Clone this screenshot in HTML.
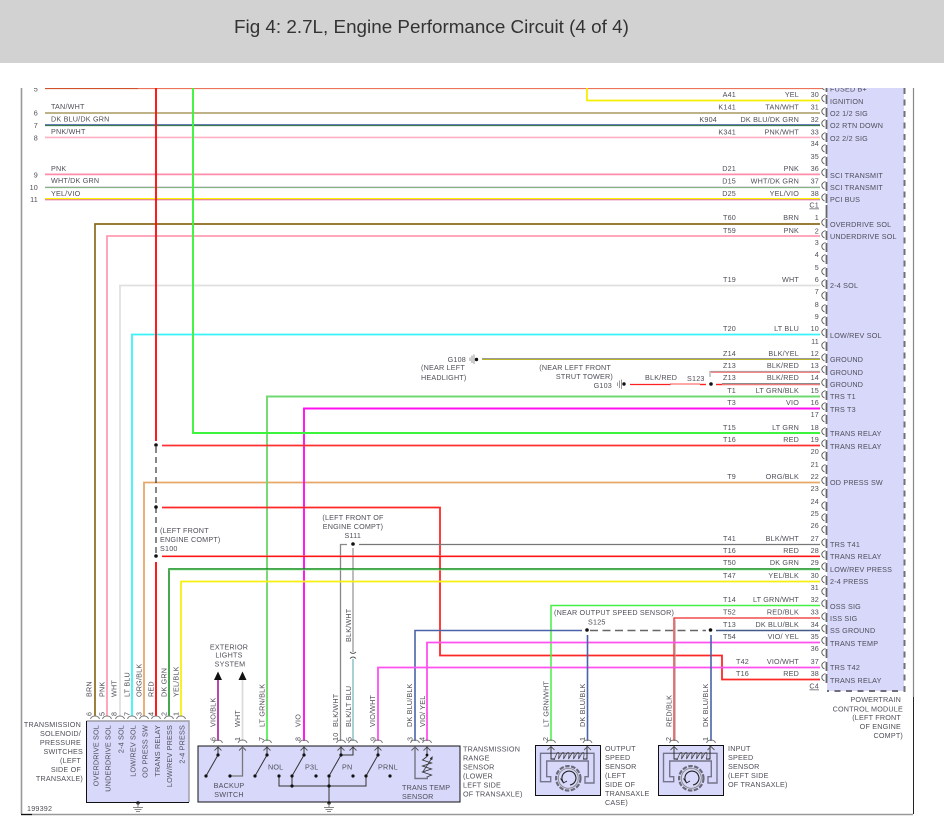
<!DOCTYPE html>
<html><head><meta charset="utf-8"><style>
html,body{margin:0;padding:0;background:#fff;width:944px;height:829px;overflow:hidden}
#h{position:absolute;left:0;top:0;width:944px;height:63px;background:#d2d2d2}
#h div{position:absolute;left:234px;top:16px;font:18.85px/22px "Liberation Sans",sans-serif;color:#333;white-space:nowrap}
svg{position:absolute;left:0;top:0;filter:blur(.3px)}
text{font-family:"Liberation Sans",sans-serif;font-size:7.2px;letter-spacing:.2px;fill:#4e4e58}
.e{text-anchor:end}.m{text-anchor:middle}
path,line{fill:none}
</style></head><body>
<div id="h"><div>Fig 4: 2.7L, Engine Performance Circuit (4 of 4)</div></div>
<svg width="944" height="829" viewBox="0 0 944 829">
<defs>
<clipPath id="cp"><rect x="0" y="88" width="944" height="741"/></clipPath>
<g id="c"><path d="M825.5 -5.5Q821 -4 822 -0.5Q822.5 1 824.5 2" stroke="#555" stroke-width=".9"/><path d="M826.5 -5V4" stroke="#666" stroke-width="1.8"/></g>
<g id="u"><path d="M-4.5 1.5Q-3.5 -1.5 0 -1.5Q3.5 -1.5 4.5 1.5" stroke="#777" stroke-width=".9"/></g>
<g id="a"><path d="M-3.5 2.5L0 -1L3.5 2.5" stroke="#555" stroke-width=".9"/></g>
<g id="gnd"><circle cx="0" cy="0" r="1.7" fill="#111"/><path d="M0 0V4" stroke="#777"/><path d="M-5 4.5H5M-3.5 6.5H3.5M-2 8.5H2" stroke="#888" stroke-width="1"/></g>
<g id="sen"><path d="M5.5 36.7V8.3H59V38H50V31.7H53.3V16H11.7V31.7H15.7V36.7Z" stroke="#74748a" stroke-width="1.4"/>
<path d="M16 1V14H20M52 1V14H48" stroke="#222" stroke-width=".9"/>
<path d="M19 15L22 8Q24.5 6.5 24 10L23.5 14L27 8Q29.5 6.5 29 10L28.5 14L32 8Q34.5 6.5 34 10L33.5 14L37 8Q39.5 6.5 39 10L38.5 14L42 8Q44.5 6.5 44 10L43.5 14L47 8Q49.5 6.5 49 10L48.5 14" stroke="#444" stroke-width=".8"/>
<circle cx="33.3" cy="33.3" r="12.2" fill="none" stroke="#6a6a78" stroke-width="2.2" stroke-dasharray="4.5 1.5"/><circle cx="33.3" cy="33.3" r="10" fill="none" stroke="#888" stroke-width=".9"/>
<path d="M28.5 37.5A7 7 0 1 1 35 40" stroke="#222" stroke-width="1.1"/><path d="M25.5 33.5L28.5 38L32 36" stroke="#222" stroke-width=".8"/></g>
</defs>

<path d="M21.5 88V814" stroke="#999" stroke-width="1.6"/>
<path d="M913.5 88V697" stroke="#888" stroke-width="1.2"/><path d="M913.5 697V814" stroke="#222" stroke-width="1"/>
<path d="M21 814.5H913" stroke="#999" stroke-width="1.4"/><path d="M21 814.5H32" stroke="#111" stroke-width="1.2"/>

<g clip-path="url(#cp)">
<!-- PCM body -->
<rect x="827" y="80" width="77" height="611" fill="#d8d8fb"/>
<path d="M904.5 88V691H827" stroke="#70707a" stroke-width="2" stroke-dasharray="6 5.5"/>

<!-- horizontal wires -->
<path d="M45 88.5H138" stroke="#d0532e" stroke-width="1.3"/><path d="M138 88.5H822" stroke="#ec7458" stroke-width="1.3"/>
<path d="M587 88V100.5H820" stroke="#f5f000" stroke-width="1.8"/>
<path d="M45 113H820" stroke="#a89860" stroke-width="1.5"/>
<path d="M45 124.6H820" stroke="#4f6cae" stroke-width="1"/><path d="M45 125.6H820" stroke="#246c34" stroke-width="1"/>
<path d="M45 137.4H820" stroke="#ffb0c2" stroke-width="1.6"/>
<path d="M45 174.4H820" stroke="#ff8ca8" stroke-width="1.8"/>
<path d="M45 186.7H820" stroke="#d4d4dc" stroke-width="1"/><path d="M45 187.6H820" stroke="#76ae76" stroke-width="1"/>
<path d="M45 198.6H820" stroke="#fbf600" stroke-width="1.3"/><path d="M45 199.8H820" stroke="#d84c90" stroke-width=".9"/>
<path d="M95 716V224H820" stroke="#8a6a1c" stroke-width="1.7"/>
<path d="M107 716V236H820" stroke="#ff9cb2" stroke-width="1.8"/>
<path d="M120 716V285.5H820" stroke="#e0e0e0" stroke-width="1.8"/>
<path d="M132 716V334.5H820" stroke="#38f4fa" stroke-width="1.8"/>
<path d="M144 716V482.5H820" stroke="#e8a868" stroke-width="1.8"/>
<path d="M482 358.6H820" stroke="#8c8c8c" stroke-width="1"/><path d="M482 359.5H820" stroke="#b8b428" stroke-width="1"/>
<path d="M820 371.5H710V377" stroke="#aaa" stroke-width="1.2"/><path d="M820 372.3H711" stroke="#f06060" stroke-width="1"/>
<path d="M630 384.5H671" stroke="#f22" stroke-width="1.2"/>
<path d="M670 384H700" stroke="#f88" stroke-width="1.4"/><path d="M700 384.5H706" stroke="#f22" stroke-width="1.4"/>
<path d="M716 384.5H722" stroke="#f22" stroke-width="1.4"/><path d="M722 383.8H820" stroke="#666" stroke-width="1"/><path d="M722 384.8H820" stroke="#f66" stroke-width="1"/>
<path d="M267 716V396.5H820" stroke="#70d870" stroke-width="1.9"/>
<path d="M304 716V408.5H820" stroke="#ff10f0" stroke-width="1.9"/>
<path d="M193 88V433H820" stroke="#3cf43c" stroke-width="1.9"/>
<path d="M162 445.5H820" stroke="#ff3030" stroke-width="1.8"/>
<path d="M162 507.5H440V655.5H722V679.5H820" stroke="#ff2828" stroke-width="1.8"/>
<path d="M359 544.5H820" stroke="#777" stroke-width="1.3"/>
<path d="M347 544.5H340.5V741" stroke="#888" stroke-width="1.3"/>
<path d="M353 548V652" stroke="#999" stroke-width="1.3"/><path d="M353 659V741" stroke="#7ab8b8" stroke-width="1.3"/>
<path d="M162 556.5H820" stroke="#f00" stroke-width="1.2"/><path d="M162 555.8H820" stroke="#ff5050" stroke-width=".9"/>
<path d="M169 716V569H820" stroke="#0a8a14" stroke-width="1.5"/><path d="M169 570H820" stroke="#9ee09e" stroke-width=".7"/>
<path d="M181 716V581.5H820" stroke="#f6f010" stroke-width="1.8"/>
<path d="M551 741V605.5H820" stroke="#44f044" stroke-width="1.5"/>
<path d="M674 741V618H820" stroke="#ee2a2a" stroke-width="1.3"/><path d="M675.2 741V619.5" stroke="#aaa" stroke-width=".9"/>
<path d="M415 741V630.5H582" stroke="#4a62a8" stroke-width="1.6"/>
<path d="M590 630.5H706" stroke="#666" stroke-width="1.5" stroke-dasharray="8 4.5"/>
<path d="M716 630.5H820" stroke="#44588c" stroke-width="1.6"/>
<path d="M427 741V642.5H820" stroke="#ff50f0" stroke-width="1.8"/>
<path d="M378 741V667.5H820" stroke="#ff50f0" stroke-width="1.8"/>
<path d="M156 88V441M156 562V716" stroke="#ff1010" stroke-width="1.9"/>
<path d="M156 447V555" stroke="#222" stroke-width="1.1" stroke-dasharray="6 4"/>
<path d="M587.5 635V741" stroke="#4a62a8" stroke-width="1.6"/>
<path d="M711 635V741" stroke="#4a62a8" stroke-width="1.6"/>

<!-- arrows wires -->
<path d="M218 680V741" stroke="#b034a8" stroke-width="1.8"/>
<path d="M242.5 680V741" stroke="#dcdcdc" stroke-width="1.8"/>
<path d="M218 671.5L214 680H222Z" style="fill:#111"/><path d="M242.5 671.5L238.5 680H246.5Z" style="fill:#111"/>
<path d="M267 716V741" stroke="#60f060" stroke-width="1.9"/><path d="M304 716V741" stroke="#ff10f0" stroke-width="1.9"/>
<path d="M350 652Q353 655 356 652M350 658.5Q353 655.5 356 658.5" stroke="#555" stroke-width=".9"/>
<!-- dots -->
<g fill="#111"><circle cx="156" cy="445" r="1.8"/><circle cx="156" cy="507" r="1.8"/><circle cx="156" cy="556" r="1.8"/><circle cx="353" cy="544" r="1.8"/><circle cx="711" cy="384" r="1.8"/><circle cx="587" cy="630" r="1.8"/><circle cx="710.5" cy="630" r="1.8"/></g>

<!-- ground G108/G103 -->
<g stroke="#999" stroke-width="1"><path d="M470 357.5V361M472 355.5V363M474 354.5V364"/><path d="M617.5 382.5V386M619.5 380.5V388M621.5 379.5V389"/></g>
<circle cx="476.5" cy="359.5" r="1.7" fill="#111"/><circle cx="624" cy="384" r="1.7" fill="#111"/>

<!-- PCM chevrons -->
<g>
<use href="#c" y="88"/><use href="#c" y="100"/><use href="#c" y="113"/><use href="#c" y="125"/><use href="#c" y="138"/><use href="#c" y="150"/><use href="#c" y="162"/><use href="#c" y="174"/><use href="#c" y="187"/><use href="#c" y="199"/>
<use href="#c" y="224"/><use href="#c" y="236"/><use href="#c" y="248"/><use href="#c" y="260"/><use href="#c" y="273"/><use href="#c" y="285"/><use href="#c" y="297"/><use href="#c" y="310"/><use href="#c" y="322"/><use href="#c" y="334"/><use href="#c" y="347"/><use href="#c" y="359"/><use href="#c" y="371"/><use href="#c" y="384"/><use href="#c" y="396"/><use href="#c" y="408"/><use href="#c" y="420"/><use href="#c" y="433"/><use href="#c" y="445"/><use href="#c" y="457"/><use href="#c" y="470"/><use href="#c" y="482"/><use href="#c" y="494"/><use href="#c" y="507"/><use href="#c" y="519"/><use href="#c" y="531"/><use href="#c" y="544"/><use href="#c" y="556"/><use href="#c" y="568"/><use href="#c" y="581"/><use href="#c" y="593"/><use href="#c" y="605"/><use href="#c" y="618"/><use href="#c" y="630"/><use href="#c" y="642"/><use href="#c" y="654"/><use href="#c" y="667"/><use href="#c" y="679"/>
<path d="M826.5 205V218" stroke="#666" stroke-width="1.8"/>
</g>

<!-- left block -->
<rect x="86" y="721" width="103" height="81" fill="#d8d8fb"/>
<path d="M86.5 721H189V802" stroke="#9a9aa2" stroke-width="1.4"/><path d="M86.5 721V802.5H189" stroke="#111" stroke-width="1"/>
<g><use href="#u" x="95" y="717.5"/><use href="#u" x="107" y="717.5"/><use href="#u" x="120" y="717.5"/><use href="#u" x="132" y="717.5"/><use href="#u" x="144" y="717.5"/><use href="#u" x="156" y="717.5"/><use href="#u" x="169" y="717.5"/><use href="#u" x="181" y="717.5"/></g>
<use href="#gnd" x="138" y="803"/>

<!-- mid block -->
<rect x="198" y="746" width="262" height="56" fill="#d8d8fb" stroke="#111" stroke-width="1"/>
<g><use href="#u" x="218" y="741.5"/><use href="#u" x="242.5" y="741.5"/><use href="#u" x="267" y="741.5"/><use href="#u" x="304" y="741.5"/><use href="#u" x="341" y="741.5"/><use href="#u" x="353" y="741.5"/><use href="#u" x="378" y="741.5"/><use href="#u" x="415" y="741.5"/><use href="#u" x="427" y="741.5"/>
<use href="#a" x="218" y="748"/><use href="#a" x="242.5" y="748"/><use href="#a" x="267" y="748"/><use href="#a" x="304" y="748"/><use href="#a" x="341" y="748"/><use href="#a" x="353" y="748"/><use href="#a" x="378" y="748"/><use href="#a" x="415" y="748"/><use href="#a" x="427" y="748"/></g>
<g stroke="#333" stroke-width="1">
<path d="M218 747V755L206 776"/><path d="M267 747V755L255 776"/><path d="M304 747V755L292 776"/><path d="M341 747V755L329 776"/><path d="M378 747V755L366 776"/>
<path d="M353 747V755H341"/>
<path d="M279 776V786H366V776M292 776V786M329 776V802"/>
<path d="M427 747V756.5L422.5 760L431.5 763L422.5 766L431.5 769L422.5 772L431.5 775L427 777" stroke-width=".9"/>
</g>
<path d="M415 747V778.5H427.3V776" stroke="#747484" stroke-width="1.4"/>
<path d="M242.5 747V776H230" stroke="#777" stroke-width="1.3"/>
<path d="M423 771.7L432 757.7" stroke="#444" stroke-width=".9"/><path d="M432.5 756.5L430 758.5L432 760Z" style="fill:#333" stroke="#333" stroke-width=".5"/>
<g fill="#111"><circle cx="218" cy="755" r="1.6"/><circle cx="206" cy="776" r="1.6"/><circle cx="230" cy="776" r="1.6"/><circle cx="267" cy="755" r="1.6"/><circle cx="255" cy="776" r="1.6"/><circle cx="279" cy="776" r="1.6"/><circle cx="304" cy="755" r="1.6"/><circle cx="292" cy="776" r="1.6"/><circle cx="316" cy="776" r="1.6"/><circle cx="341" cy="755" r="1.6"/><circle cx="329" cy="776" r="1.6"/><circle cx="353" cy="776" r="1.6"/><circle cx="378" cy="755" r="1.6"/><circle cx="366" cy="776" r="1.6"/><circle cx="390" cy="776" r="1.6"/><circle cx="292" cy="786" r="1.6"/><circle cx="329" cy="786" r="1.6"/><circle cx="427" cy="755" r="1.4"/></g>
<use href="#gnd" x="329" y="803"/>

<!-- sensors -->
<rect x="535.5" y="745.5" width="65" height="50" fill="#d8d8fb" stroke="#111" stroke-width="1"/>
<rect x="658.5" y="745.5" width="65" height="50" fill="#d8d8fb" stroke="#111" stroke-width="1"/>
<use href="#sen" x="535" y="745"/><use href="#sen" x="658" y="745"/>
<use href="#u" x="551" y="741.5"/><use href="#u" x="587.5" y="741.5"/><use href="#u" x="674" y="741.5"/><use href="#u" x="711" y="741.5"/>
<use href="#a" x="551" y="747.5"/><use href="#a" x="587.5" y="747.5"/><use href="#a" x="674" y="747.5"/><use href="#a" x="711" y="747.5"/>

<!-- left labels -->
<text class="e" x="38" y="91.5">5</text><text class="e" x="38" y="115.5">6</text><text class="e" x="38" y="128">7</text><text class="e" x="38" y="140.5">8</text><text class="e" x="38" y="177.5">9</text><text class="e" x="38" y="190">10</text><text class="e" x="38" y="202">11</text>
<text x="51" y="109">TAN/WHT</text><text x="51" y="121.5">DK BLU/DK GRN</text><text x="51" y="134">PNK/WHT</text><text x="51" y="171">PNK</text><text x="51" y="183">WHT/DK GRN</text><text x="51" y="196">YEL/VIO</text>

<!-- codes -->
<g class="e">
<text class="e" x="736" y="97">A41</text><text class="e" x="736" y="109.5">K141</text><text class="e" x="717" y="122">K904</text><text class="e" x="736" y="134.5">K341</text><text class="e" x="736" y="171">D21</text><text class="e" x="736" y="183.5">D15</text><text class="e" x="736" y="196">D25</text>
<text class="e" x="736" y="220">T60</text><text class="e" x="736" y="233">T59</text><text class="e" x="736" y="282">T19</text><text class="e" x="736" y="331">T20</text><text class="e" x="736" y="356">Z14</text><text class="e" x="736" y="368">Z13</text><text class="e" x="736" y="380">Z13</text><text class="e" x="736" y="393">T1</text><text class="e" x="736" y="405">T3</text><text class="e" x="736" y="430">T15</text><text class="e" x="736" y="442">T16</text><text class="e" x="736" y="479">T9</text><text class="e" x="736" y="541">T41</text><text class="e" x="736" y="553">T16</text><text class="e" x="736" y="565">T50</text><text class="e" x="736" y="578">T47</text><text class="e" x="736" y="602">T14</text><text class="e" x="736" y="614.5">T52</text><text class="e" x="736" y="627">T13</text><text class="e" x="736" y="639">T54</text><text class="e" x="749" y="664">T42</text><text class="e" x="749" y="676">T16</text>
</g>
<!-- colours -->
<text class="e" x="799" y="97">YEL</text><text class="e" x="799" y="109.5">TAN/WHT</text><text class="e" x="799" y="122">DK BLU/DK GRN</text><text class="e" x="799" y="134.5">PNK/WHT</text><text class="e" x="799" y="171">PNK</text><text class="e" x="799" y="183.5">WHT/DK GRN</text><text class="e" x="799" y="196">YEL/VIO</text>
<text class="e" x="799" y="220">BRN</text><text class="e" x="799" y="233">PNK</text><text class="e" x="799" y="282">WHT</text><text class="e" x="799" y="331">LT BLU</text><text class="e" x="799" y="356">BLK/YEL</text><text class="e" x="799" y="368">BLK/RED</text><text class="e" x="799" y="380">BLK/RED</text><text class="e" x="799" y="393">LT GRN/BLK</text><text class="e" x="799" y="405">VIO</text><text class="e" x="799" y="430">LT GRN</text><text class="e" x="799" y="442">RED</text><text class="e" x="799" y="479">ORG/BLK</text><text class="e" x="799" y="541">BLK/WHT</text><text class="e" x="799" y="553">RED</text><text class="e" x="799" y="565">DK GRN</text><text class="e" x="799" y="578">YEL/BLK</text><text class="e" x="799" y="602">LT GRN/WHT</text><text class="e" x="799" y="614.5">RED/BLK</text><text class="e" x="799" y="627">DK BLU/BLK</text><text class="e" x="799" y="639">VIO/ YEL</text><text class="e" x="799" y="664">VIO/WHT</text><text class="e" x="799" y="676">RED</text>
<!-- pin numbers -->
<text class="e" x="819" y="97">30</text><text class="e" x="819" y="109.5">31</text><text class="e" x="819" y="122">32</text><text class="e" x="819" y="134.5">33</text><text class="e" x="819" y="146">34</text><text class="e" x="819" y="159">35</text><text class="e" x="819" y="171">36</text><text class="e" x="819" y="183.5">37</text><text class="e" x="819" y="196">38</text>
<text class="e" x="819" y="207.5" text-decoration="underline">C1</text>
<text class="e" x="819" y="220">1</text><text class="e" x="819" y="233.5">2</text><text class="e" x="819" y="245">3</text><text class="e" x="819" y="257">4</text><text class="e" x="819" y="270">5</text><text class="e" x="819" y="282">6</text><text class="e" x="819" y="294">7</text><text class="e" x="819" y="307">8</text><text class="e" x="819" y="319">9</text><text class="e" x="819" y="331">10</text><text class="e" x="819" y="344">11</text><text class="e" x="819" y="356">12</text><text class="e" x="819" y="368">13</text><text class="e" x="819" y="380">14</text><text class="e" x="819" y="393">15</text><text class="e" x="819" y="405">16</text><text class="e" x="819" y="417">17</text><text class="e" x="819" y="430">18</text><text class="e" x="819" y="442">19</text><text class="e" x="819" y="454">20</text><text class="e" x="819" y="467">21</text><text class="e" x="819" y="479">22</text><text class="e" x="819" y="491">23</text><text class="e" x="819" y="504">24</text><text class="e" x="819" y="516">25</text><text class="e" x="819" y="528">26</text><text class="e" x="819" y="541">27</text><text class="e" x="819" y="553">28</text><text class="e" x="819" y="565">29</text><text class="e" x="819" y="578">30</text><text class="e" x="819" y="590">31</text><text class="e" x="819" y="602">32</text><text class="e" x="819" y="614.5">33</text><text class="e" x="819" y="627">34</text><text class="e" x="819" y="639">35</text><text class="e" x="819" y="651">36</text><text class="e" x="819" y="664">37</text><text class="e" x="819" y="676">38</text>
<text class="e" x="819" y="688.5" text-decoration="underline">C4</text>
<!-- PCM labels -->
<text x="830" y="91.5">FUSED B+</text><text x="830" y="104">IGNITION</text><text x="830" y="116">O2 1/2 SIG</text><text x="830" y="128">O2 RTN DOWN</text><text x="830" y="141">O2 2/2 SIG</text><text x="830" y="178">SCI TRANSMIT</text><text x="830" y="190">SCI TRANSMIT</text><text x="830" y="202">PCI BUS</text><text x="830" y="227">OVERDRIVE SOL</text><text x="830" y="239">UNDERDRIVE SOL</text><text x="830" y="288">2-4 SOL</text><text x="830" y="338">LOW/REV SOL</text><text x="830" y="362">GROUND</text><text x="830" y="375">GROUND</text><text x="830" y="387">GROUND</text><text x="830" y="399">TRS T1</text><text x="830" y="412">TRS T3</text><text x="830" y="436">TRANS RELAY</text><text x="830" y="449">TRANS RELAY</text><text x="830" y="485">OD PRESS SW</text><text x="830" y="547">TRS T41</text><text x="830" y="559">TRANS RELAY</text><text x="830" y="572">LOW/REV PRESS</text><text x="830" y="584">2-4 PRESS</text><text x="830" y="609">OSS SIG</text><text x="830" y="621">ISS SIG</text><text x="830" y="633">SS GROUND</text><text x="830" y="646">TRANS TEMP</text><text x="830" y="670">TRS T42</text><text x="830" y="683">TRANS RELAY</text>
<text class="e" x="901" y="702">POWERTRAIN</text><text class="e" x="903" y="711.3">CONTROL MODULE</text><text class="e" x="901" y="720">(LEFT FRONT</text><text class="e" x="901" y="729">OF ENGINE</text><text class="e" x="903" y="738">COMPT)</text>

<!-- mid labels -->
<text class="e" x="466" y="362">G108</text><text x="421" y="370">(NEAR LEFT</text><text x="421" y="380">HEADLIGHT)</text>
<text class="e" x="611" y="370">(NEAR LEFT FRONT</text><text class="e" x="613" y="379">STRUT TOWER)</text><text class="e" x="612" y="388">G103</text>
<text x="645" y="380">BLK/RED</text><text x="687" y="381">S123</text>
<text x="160" y="533">(LEFT FRONT</text><text x="160" y="542">ENGINE COMPT)</text><text x="160" y="551">S100</text>
<text class="m" x="353" y="520">(LEFT FRONT OF</text><text class="m" x="353" y="529">ENGINE COMPT)</text><text x="344.5" y="538">S111</text>
<text x="554" y="615">(NEAR OUTPUT SPEED SENSOR)</text><text x="588" y="624.5">S125</text>

<!-- left block labels -->
<text class="e" x="81" y="727">TRANSMISSION</text><text class="e" x="81" y="736">SOLENOID/</text><text class="e" x="81" y="745">PRESSURE</text><text class="e" x="83" y="754">SWITCHES</text><text class="e" x="81" y="763">(LEFT</text><text class="e" x="81" y="772">SIDE OF</text><text class="e" x="83" y="781">TRANSAXLE)</text>
<text x="27" y="811">199392</text>
<g>
<text class="e" transform="rotate(-90 98.5 725)" x="98.5" y="725">OVERDRIVE SOL</text>
<text class="e" transform="rotate(-90 110.5 725)" x="110.5" y="725">UNDERDRIVE SOL</text>
<text class="e" transform="rotate(-90 123.5 725)" x="123.5" y="725">2-4 SOL</text>
<text class="e" transform="rotate(-90 135.5 725)" x="135.5" y="725">LOW/REV SOL</text>
<text class="e" transform="rotate(-90 147.5 725)" x="147.5" y="725">OD PRESS SW</text>
<text class="e" transform="rotate(-90 160 725)" x="160" y="725">TRANS RELAY</text>
<text class="e" transform="rotate(-90 172 725)" x="172" y="725">LOW/REV PRESS</text>
<text class="e" transform="rotate(-90 184.5 725)" x="184.5" y="725">2-4 PRESS</text>
<text transform="rotate(-90 91.5 697)" x="91.5" y="697">BRN</text>
<text transform="rotate(-90 104.5 697)" x="104.5" y="697">PNK</text>
<text transform="rotate(-90 116.5 697)" x="116.5" y="697">WHT</text>
<text transform="rotate(-90 129.5 697)" x="129.5" y="697">LT BLU</text>
<text transform="rotate(-90 141.5 697)" x="141.5" y="697">ORG/BLK</text>
<text transform="rotate(-90 153.5 697)" x="153.5" y="697">RED</text>
<text transform="rotate(-90 166.5 697)" x="166.5" y="697">DK GRN</text>
<text transform="rotate(-90 178.5 697)" x="178.5" y="697">YEL/BLK</text>
<text transform="rotate(-90 91.5 716)" x="91.5" y="716">6</text>
<text transform="rotate(-90 104.5 716)" x="104.5" y="716">5</text>
<text transform="rotate(-90 116.5 716)" x="116.5" y="716">8</text>
<text transform="rotate(-90 129.5 716)" x="129.5" y="716">7</text>
<text transform="rotate(-90 141.5 716)" x="141.5" y="716">3</text>
<text transform="rotate(-90 153.5 716)" x="153.5" y="716">4</text>
<text transform="rotate(-90 166.5 716)" x="166.5" y="716">2</text>
<text transform="rotate(-90 178.5 716)" x="178.5" y="716">1</text>

<text transform="rotate(-90 215.5 727)" x="215.5" y="727">VIO/BLK</text>
<text transform="rotate(-90 240 727)" x="240" y="727">WHT</text>
<text transform="rotate(-90 264.5 727)" x="264.5" y="727">LT GRN/BLK</text>
<text transform="rotate(-90 300.5 727)" x="300.5" y="727">VIO</text>
<text transform="rotate(-90 338 727)" x="338" y="727">BLK/WHT</text>
<text transform="rotate(-90 351 727)" x="351" y="727">BLK/LT BLU</text>
<text transform="rotate(-90 351 642)" x="351" y="642">BLK/WHT</text>
<text transform="rotate(-90 375 727)" x="375" y="727">VIO/WHT</text>
<text transform="rotate(-90 412 727)" x="412" y="727">DK BLU/BLK</text>
<text transform="rotate(-90 425 727)" x="425" y="727">VIO/ YEL</text>
<text transform="rotate(-90 215.5 741)" x="215.5" y="741">6</text>
<text transform="rotate(-90 240 741)" x="240" y="741">1</text>
<text transform="rotate(-90 264 741)" x="264" y="741">7</text>
<text transform="rotate(-90 300.5 741)" x="300.5" y="741">8</text>
<text transform="rotate(-90 338 741)" x="338" y="741">10</text>
<text transform="rotate(-90 351.5 741)" x="351.5" y="741">5</text>
<text transform="rotate(-90 375.5 741)" x="375.5" y="741">9</text>
<text transform="rotate(-90 412.5 741)" x="412.5" y="741">3</text>
<text transform="rotate(-90 424.5 741)" x="424.5" y="741">4</text>

<text transform="rotate(-90 548.5 727)" x="548.5" y="727">LT GRN/WHT</text>
<text transform="rotate(-90 585 727)" x="585" y="727">DK BLU/BLK</text>
<text transform="rotate(-90 671.5 727)" x="671.5" y="727">RED/BLK</text>
<text transform="rotate(-90 708 727)" x="708" y="727">DK BLU/BLK</text>
<text transform="rotate(-90 548 741)" x="548" y="741">2</text>
<text transform="rotate(-90 585 741)" x="585" y="741">1</text>
<text transform="rotate(-90 671 741)" x="671" y="741">2</text>
<text transform="rotate(-90 708 741)" x="708" y="741">1</text>
</g>

<text class="m" x="229" y="649.5">EXTERIOR</text><text class="m" x="229" y="657.5">LIGHTS</text><text class="m" x="230" y="666.5">SYSTEM</text>
<text class="m" x="229" y="788">BACKUP</text><text class="m" x="229" y="797">SWITCH</text>
<text x="268" y="769.5">NOL</text><text x="305" y="769.5">P3L</text><text x="342" y="769.5">PN</text><text x="378" y="769.5">PRNL</text>
<text x="402" y="790">TRANS TEMP</text><text x="402" y="799">SENSOR</text>
<text x="463" y="751.5">TRANSMISSION</text><text x="463" y="760.5">RANGE</text><text x="463" y="769.5">SENSOR</text><text x="463" y="778.5">(LOWER</text><text x="463" y="787.5">LEFT SIDE</text><text x="463" y="796.5">OF TRANSAXLE)</text>
<text x="605" y="751">OUTPUT</text><text x="605" y="760">SPEED</text><text x="605" y="769">SENSOR</text><text x="605" y="778">(LEFT</text><text x="605" y="787">SIDE OF</text><text x="605" y="796">TRANSAXLE</text><text x="605" y="805">CASE)</text>
<text x="728" y="751">INPUT</text><text x="728" y="760">SPEED</text><text x="728" y="769">SENSOR</text><text x="728" y="778">(LEFT SIDE</text><text x="728" y="787">OF TRANSAXLE)</text>
</g>
</svg>
</body></html>
